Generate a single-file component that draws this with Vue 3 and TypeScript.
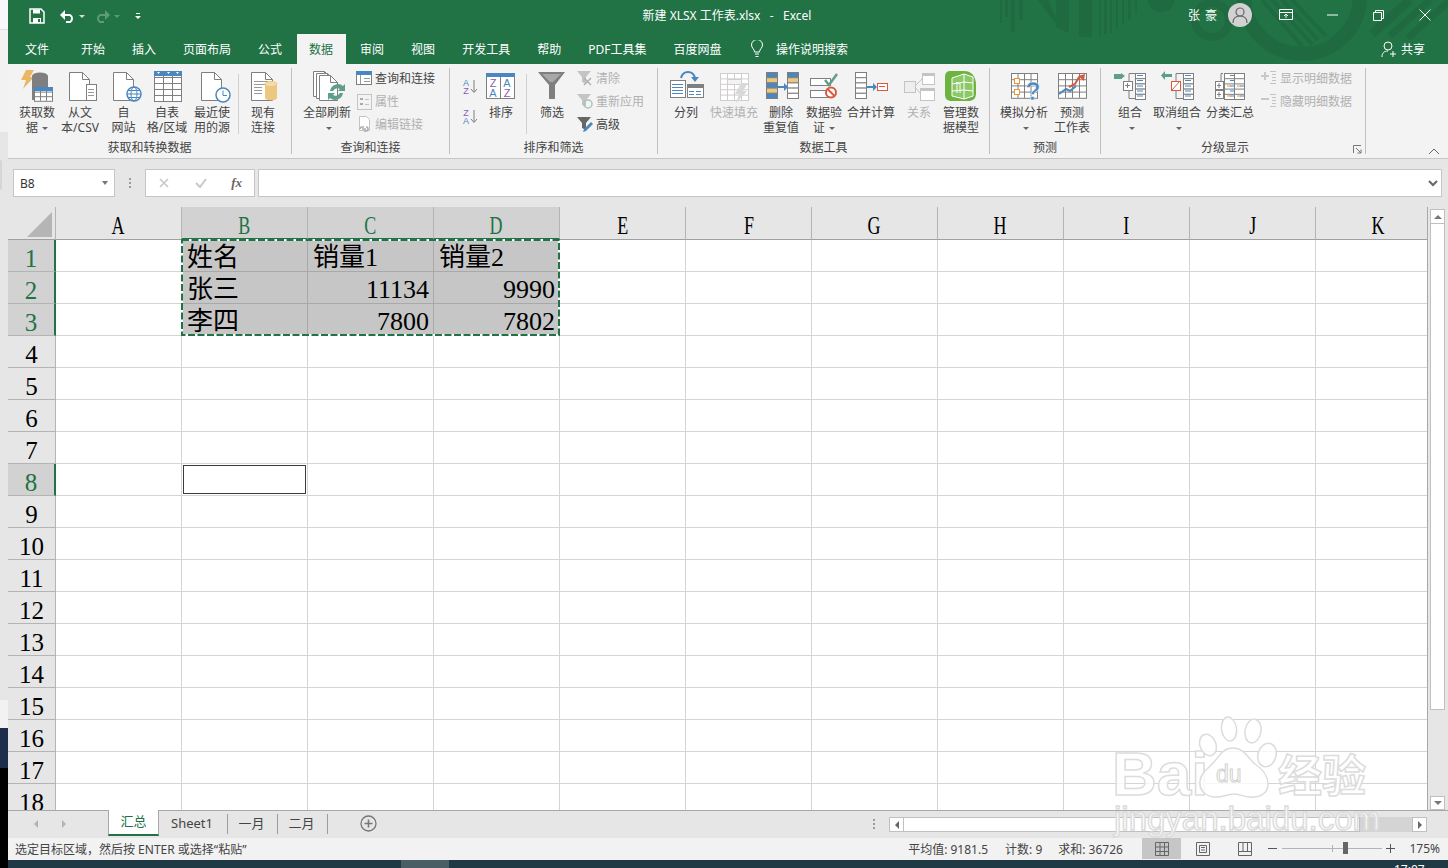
<script setup lang="ts">
type Row = { icon: string; label: string; off?: boolean }
type Item =
  | { kind: 'big'; w: number; icon: string; lines: string[]; caret?: boolean; off?: boolean }
  | { kind: 'sep'; w: number }
  | { kind: 'small'; w: number; ml?: number; rows: Row[] }
  | { kind: 'sort'; w: number }
type Group = { title: string; w: number; pad: number; launcher?: boolean; items: Item[] }

const G = '#7f7f7f'
const L = '#c4c4c4'
const BLUE = '#4a86c0'
const GOLD = '#ecc77f'
const RED = '#d9593d'
const TEAL = '#5f9e8a'

const svg = (w: number, h: number, body: string) =>
  `<svg width="${w}" height="${h}" viewBox="0 0 ${w} ${h}" style="display:block;overflow:visible">${body}</svg>`
const page = (x: number, y: number, w = 20, h = 28, s = G) =>
  `<path d="M${x + 0.5} ${y + 0.5}h${w - 7}l7 7v${h - 7}h-${w}z" fill="#fff" stroke="${s}"/><path d="M${x + w - 6.5} ${y + 0.5}v7h7" fill="none" stroke="${s}"/>`
const rect = (x: number, y: number, w: number, h: number, fill = '#fff', s = G) =>
  `<rect x="${x + 0.5}" y="${y + 0.5}" width="${w}" height="${h}" fill="${fill}" stroke="${s}"/>`
const lines = (d: string, s = G, sw = 1) => `<path d="${d}" fill="none" stroke="${s}" stroke-width="${sw}"/>`
const table = (x: number, y: number, cols: number, rows: number, cw: number, ch: number, s = G) => {
  let out = rect(x, y, cols * cw, rows * ch, '#fff', s)
  for (let i = 1; i < cols; i++) out += lines(`M${x + i * cw + 0.5} ${y}v${rows * ch}`, s)
  for (let i = 1; i < rows; i++) out += lines(`M${x} ${y + i * ch + 0.5}h${cols * cw}`, s)
  return out
}
const stack = (x: number, y: number, colors: string[], w = 11, ch = 5, s = G) =>
  colors.map((c, i) => rect(x, y + i * ch, w, ch, c, s)).join('')
const letter = (x: number, y: number, t: string, c: string, size = 10) =>
  `<text x="${x}" y="${y}" font-family="Liberation Sans" font-size="${size}" fill="${c}" text-anchor="middle">${t}</text>`
const funnel = (c: string) => `<path d="M0 1h14l-5 6v7l-4-2V7z" fill="${c}"/>`

const icons: Record<string, string> = {
  getData: svg(34, 34,
    `<path d="M6 1h8l-4 7h4L3 20l3-9H1z" fill="#eab766"/><ellipse cx="20" cy="7" rx="8" ry="3.5" fill="${G}"/><path d="M12 7h16v24H12z" fill="${G}"/>` +
    table(14, 18, 3, 3, 6, 4.6) + `<rect x="14" y="18" width="19" height="4" fill="${BLUE}"/>`),
  fromText: svg(34, 34, page(6, 3) + rect(23, 15, 10, 16) + lines('M25 20.5h6M25 23.5h6M25 26.5h6', '#999')),
  fromWeb: svg(34, 34, page(6, 3) +
    `<circle cx="27" cy="25" r="7" fill="#fff" stroke="${BLUE}" stroke-width="1.5"/><ellipse cx="27" cy="25" rx="3" ry="7" fill="none" stroke="${BLUE}"/>` +
    lines('M20 25h14M21 21.5h12M21 28.5h12', BLUE)),
  fromTable: svg(34, 34, table(4, 2, 3, 5, 9, 6) + `<rect x="4" y="2" width="28" height="5" fill="${BLUE}"/><path d="M7 3h3l-1.5 2zM17 3h3l-1.5 2zM26 3h3l-1.5 2z" fill="#fff"/>`),
  recent: svg(34, 34, page(6, 3) + `<circle cx="28" cy="26" r="7" fill="#fff" stroke="${BLUE}" stroke-width="1.5"/>` + lines('M28 21.5v5h4', BLUE)),
  existing: svg(34, 34, page(5, 3, 21, 28) + lines('M8 12.5h14M8 15.5h14M8 18.5h8M8 21.5h8M8 24.5h8', '#999') +
    `<path d="M19 15h12v14c0 3-12 3-12 0z" fill="${GOLD}"/><ellipse cx="25" cy="15" rx="6" ry="2.5" fill="#f5dca8" stroke="${GOLD}"/>`),
  refreshAll: svg(34, 34, page(3, 2, 18, 25) + page(6, 4, 18, 25) + page(9, 6, 18, 25) +
    `<path d="M20 25a8 8 0 0 1 13-5l2-2v7h-7l2-2a5 5 0 0 0-7 2zM33 27a8 8 0 0 1-13 5l-2 2v-7h7l-2 2a5 5 0 0 0 7-2z" fill="${TEAL}" transform="translate(0 -3)"/>`),
  query: svg(16, 16, rect(0, 1, 15, 13) + `<rect x="0" y="1" width="16" height="4" fill="${BLUE}"/>` + lines('M4.5 5v9M8 8.5h6M8 11.5h6', '#999')),
  props: svg(16, 16, rect(1, 1, 14, 15, '#f3f3f3', L) + `<rect x="4" y="5" width="3" height="2" fill="#aaa"/><rect x="4" y="10" width="3" height="2" fill="#aaa"/>` + lines('M9 6.5h4M9 11.5h4', L)),
  links: svg(16, 16, `<path d="M3.5 .5h7l3 3v11h-10z" fill="#fff" stroke="${L}"/>` + lines('M4 13a2 2 0 0 1 2-2h2M8 15h2a2 2 0 0 0 0-4M6 13h4', '#aaa', 1.5)),
  az: svg(16, 16, letter(4, 8, 'A', BLUE, 9) + letter(4, 16, 'Z', '#8a5cb0', 9) + lines('M12 2v12M9 11l3 3.5 3-3.5', G)),
  za: svg(16, 16, letter(4, 8, 'Z', '#8a5cb0', 9) + letter(4, 16, 'A', BLUE, 9) + lines('M12 2v12M9 11l3 3.5 3-3.5', G)),
  sort: svg(34, 34, rect(2, 4, 28, 25, '#fff') + `<rect x="2" y="4" width="29" height="4" fill="${BLUE}"/>` + lines('M16.5 8v21') +
    letter(9, 18, 'Z', '#8a5cb0', 11) + letter(9, 28, 'A', BLUE, 11) + letter(23, 18, 'A', BLUE, 11) + letter(23, 28, 'Z', '#8a5cb0', 11)),
  filter: svg(34, 34, `<path d="M3 3h27L20 16v14h-6V16z" fill="${G}"/><path d="M7 5h19l-8 8h-3z" fill="#a8a8a8"/>`),
  clear: svg(16, 16, funnel(L) + lines('M7 8l7 7M14 8l-7 7', '#b0b0b0', 1.5)),
  reapply: svg(16, 16, funnel(L) + `<circle cx="11" cy="11" r="4" fill="none" stroke="#a8c4b8" stroke-width="1.5"/>`),
  advanced: svg(16, 16, funnel('#666') + `<path d="M14 6l2 2-7 7-3 1 1-3z" fill="${BLUE}"/>`),
  split: svg(38, 34, rect(3, 11, 15, 17) + lines('M5 15.5h11M5 18.5h11M5 21.5h11M5 24.5h11', BLUE) +
    rect(20, 15, 16, 13) + `<rect x="20" y="15" width="17" height="4" fill="${G}"/>` + lines('M22 22.5h5M29 22.5h5M22 25.5h5M29 25.5h5', BLUE) +
    lines('M14 9c2-8 12-8 14 0', BLUE, 2) + `<path d="M24 8h8l-4 5z" fill="${BLUE}"/>`),
  flash: svg(34, 34, table(3, 4, 4, 5, 7, 5.4, '#d0ccd0') + rect(10, 10, 14, 5, '#f3f3f3', '#cfcfcf') + `<path d="M24 14h7l-5 8h4L19 34l3-9h-4z" fill="#d8d8d8"/>`),
  dedupe: svg(34, 34, stack(2, 3, [BLUE, GOLD, BLUE, GOLD, BLUE], 11, 5.2) + `<path d="M13 17h7v-3l4 4-4 4v-3h-7z" fill="${BLUE}"/>` + stack(23, 3, [BLUE, GOLD, '#fff', '#fff', '#fff'], 11, 5.2)),
  validate: svg(34, 34, rect(3, 9, 20, 7, '#fff') + rect(3, 21, 18, 7, '#fff') + lines('M18 11l4 5 8-11', TEAL, 2.5) +
    `<circle cx="24" cy="23.5" r="5" fill="#fff" stroke="${RED}" stroke-width="2"/>` + lines('M20.5 20l7 7', RED, 2)),
  consolidate: svg(34, 34, stack(1, 3, ['#fff', '#fff', '#fff', '#fff', '#fff'], 11, 5.2) + `<path d="M13 17h6v-3l4 4-4 4v-3h-6z" fill="${BLUE}"/>` + rect(23, 14, 10, 7, '#fff', RED) + lines('M25 17.5h6', RED)),
  relations: svg(34, 34, rect(2, 12, 11, 11, '#eee', L) + rect(20, 4, 12, 11, '#fff', L) + rect(18, 19, 14, 12, '#fff', L) +
    `<rect x="20" y="4" width="13" height="3" fill="${L}"/><rect x="18" y="19" width="15" height="3" fill="${L}"/>` + lines('M13 17l7-7M13 18l5 6', L)),
  model: svg(34, 34, `<path d="M6 2h14c8 0 12 6 12 14v8c0 6-3 8-8 8H8c-5 0-7-2-7-7V8c0-4 2-6 5-6z" fill="#6cb33f"/><path d="M8 9l12-4 9 3v19l-9 3-12-3z" fill="#8bc866" stroke="#fff"/>` +
    lines('M20 5v25M8 15l12-2 9 1M8 22l12-1 9 1', '#fff') + lines('M13 13v11M11 15l2-2 2 2M16 24V13', '#fff')),
  whatif: svg(34, 34, table(4, 4, 4, 4, 6.5, 6.2) + rect(7, 9, 5, 5, '#fff', '#e8953a') + rect(7, 20, 5, 5, '#fff', '#e8953a') +
    `<text x="26" y="31" font-family="Liberation Sans" font-weight="700" font-size="25" fill="${BLUE}" text-anchor="middle" stroke="#fff" stroke-width=".5">?</text>`),
  forecast: svg(34, 34, table(3, 4, 4, 4, 7, 6.2) + lines('M4 25l7-5 4 2 6-5', BLUE, 2) + lines('M14 18l6-3 4-7', RED, 2) + `<path d="M23 7l7-2-1 7z" fill="${RED}"/>`),
  group: svg(34, 34, `<path d="M1 7h7v-3l4 3-4 3V7z" fill="${TEAL}"/><path d="M1 5h8v5H1z" fill="${TEAL}"/>` + lines('M23 4.5h-7v25h7', G) + rect(10, 12, 9, 9) + lines('M12 16.5h5M14.5 14v5', G) + stack(22, 4, ['#fff', '#fff', '#fff', '#fff', '#fff'], 10, 5.2) + lines('M24 6.5h6M24 11.5h6M24 17h6M24 22h6M24 27h6', BLUE)),
  ungroup: svg(34, 34, `<path d="M12 5H5V2L1 6.5 5 11V8h7z" fill="${TEAL}"/>` + lines('M23 4.5h-7v25h7', G) + rect(11, 12, 9, 9, '#fff', RED) + lines('M12 21l8-9', RED) + stack(23, 4, ['#fff', '#fff', '#fff', '#fff', '#fff'], 10, 5.2) + lines('M25 6.5h6M25 11.5h6M25 17h6M25 22h6M25 27h6', BLUE)),
  subtotal: svg(34, 34, lines('M10 4.5H8v25h2') + rect(2, 12, 8, 8) + rect(2, 21, 8, 8) + lines('M4 16.5h4M6 14v5M4 25.5h4M6 23v5') + table(11, 4, 2, 5, 10, 5.2) + lines('M17 6.5h4M17 11.5h4M17 17h4M27 17h4M17 27h4M27 27h4M17 22h4', BLUE) + lines('M14 17h4M24 17h4M14 27h4M24 27h4', '#e8953a')),
  showDetail: svg(16, 16, `<path d="M0 5h3V2h2v3h3v2H5v3H3V7H0z" fill="#c8c8c8"/>` + lines('M9 1.5h6M11 4.5h4M11 7.5h4M11 10.5h4M9 13.5h6', L)),
  hideDetail: svg(16, 16, `<path d="M0 5h8v2H0z" fill="#c8c8c8"/>` + lines('M9 1.5h6M11 4.5h4M11 7.5h4M11 10.5h4M9 13.5h6', L)),
}

const groups: Group[] = [
  {
    title: '获取和转换数据', w: 284, pad: 7,
    items: [
      { kind: 'big', w: 44, icon: 'getData', lines: ['获取数', '据'], caret: true },
      { kind: 'big', w: 42, icon: 'fromText', lines: ['从文', '本/CSV'] },
      { kind: 'big', w: 45, icon: 'fromWeb', lines: ['自', '网站'] },
      { kind: 'big', w: 42, icon: 'fromTable', lines: ['自表', '格/区域'] },
      { kind: 'big', w: 48, icon: 'recent', lines: ['最近使', '用的源'] },
      { kind: 'sep', w: 4 },
      { kind: 'big', w: 46, icon: 'existing', lines: ['现有', '连接'] },
    ],
  },
  {
    title: '查询和连接', w: 158, pad: 6,
    items: [
      { kind: 'big', w: 58, icon: 'refreshAll', lines: ['全部刷新', ''], caret: true },
      {
        kind: 'small', w: 90,
        rows: [
          { icon: 'query', label: '查询和连接' },
          { icon: 'props', label: '属性', off: true },
          { icon: 'links', label: '编辑链接', off: true },
        ],
      },
    ],
  },
  {
    title: '排序和筛选', w: 208, pad: 12,
    items: [
      { kind: 'sort', w: 24 },
      { kind: 'big', w: 30, icon: 'sort', lines: ['排序'] },
      { kind: 'sep', w: 20 },
      { kind: 'big', w: 32, icon: 'filter', lines: ['筛选'] },
      {
        kind: 'small', w: 80, ml: 9,
        rows: [
          { icon: 'clear', label: '清除', off: true },
          { icon: 'reapply', label: '重新应用', off: true },
          { icon: 'advanced', label: '高级' },
        ],
      },
    ],
  },
  {
    title: '数据工具', w: 332, pad: 6,
    items: [
      { kind: 'big', w: 44, icon: 'split', lines: ['分列'] },
      { kind: 'big', w: 52, icon: 'flash', lines: ['快速填充'], off: true },
      { kind: 'big', w: 42, icon: 'dedupe', lines: ['删除', '重复值'] },
      { kind: 'big', w: 44, icon: 'validate', lines: ['数据验', '证'], caret: true },
      { kind: 'big', w: 50, icon: 'consolidate', lines: ['合并计算'] },
      { kind: 'big', w: 46, icon: 'relations', lines: ['关系'], off: true },
      { kind: 'big', w: 38, icon: 'model', lines: ['管理数', '据模型'] },
    ],
  },
  {
    title: '预测', w: 111, pad: 8,
    items: [
      { kind: 'big', w: 52, icon: 'whatif', lines: ['模拟分析', ''], caret: true },
      { kind: 'big', w: 44, icon: 'forecast', lines: ['预测', '工作表'] },
    ],
  },
  {
    title: '分级显示', w: 265, pad: 7, launcher: true,
    items: [
      { kind: 'big', w: 44, icon: 'group', lines: ['组合', ''], caret: true },
      { kind: 'big', w: 50, icon: 'ungroup', lines: ['取消组合', ''], caret: true },
      { kind: 'big', w: 56, icon: 'subtotal', lines: ['分类汇总'] },
      {
        kind: 'small', w: 100, ml: 3,
        rows: [
          { icon: 'showDetail', label: '显示明细数据', off: true },
          { icon: 'hideDetail', label: '隐藏明细数据', off: true },
        ],
      },
    ],
  },
]

const tabs = ['文件', '开始', '插入', '页面布局', '公式', '数据', '审阅', '视图', '开发工具', '帮助', 'PDF工具集', '百度网盘']
const columns = ['A', 'B', 'C', 'D', 'E', 'F', 'G', 'H', 'I', 'J', 'K']
const rows = Array.from({ length: 18 }, (_, i) => i + 1)
const cells: Record<string, string> = {
  B1: '姓名', C1: '销量1', D1: '销量2',
  B2: '张三', C2: '11134', D2: '9990',
  B3: '李四', C3: '7800', D3: '7802',
}
const selCols = ['B', 'C', 'D']
const inRange = (c: string, r: number) => selCols.includes(c) && r <= 3
const isNum = (v?: string) => !!v && /^\d+$/.test(v)
</script>

<template>
  <div class="app">
    <div class="strip">
      <i class="s1" /><i class="s2" /><i class="s3" /><i class="s4" /><i class="s5" /><i class="s6" />
    </div>

    <div class="main">
      <header class="titlebar">
        <svg class="deco" width="460" height="64" viewBox="988 0 460 64">
          <g fill="#1f6a41">
            <rect x="1000" y="0" width="2" height="23" /><rect x="1005" y="0" width="3" height="17" />
            <rect x="1011" y="0" width="4" height="32" /><rect x="1019" y="0" width="4" height="20" />
            <path d="M1038 0h10l8 18v6zM1056 0h13v33l-13-6zM1079 0h13v37h-13z" />
            <rect x="1099" y="0" width="2" height="36" /><rect x="1104" y="0" width="3" height="34" />
            <rect x="1110" y="0" width="2" height="33" /><rect x="1116" y="0" width="2" height="30" />
            <rect x="1122" y="0" width="2" height="25" /><rect x="1128" y="0" width="3" height="20" />
            <rect x="1135" y="0" width="2" height="14" />
            <circle cx="1161" cy="-2" r="14" />
          </g>
          <circle cx="1212" cy="20" r="17" fill="none" stroke="#1f6a41" stroke-width="8" />
          <circle cx="1302" cy="-4" r="58" fill="none" stroke="#1f6a41" stroke-width="14" />
          <g stroke="#1f6a41" stroke-width="4">
            <path d="M1262 0l40 46M1272 0l40 44M1282 0l36 40M1292 0l34 36" />
            <path d="M1372 34l38-34" stroke-width="9" />
            <path d="M1390 36l40-36M1408 38l40-36" stroke-width="7" />
          </g>
        </svg>

        <div class="title-row">
          <div class="qat">
            <svg class="q-save" width="16" height="16" viewBox="0 0 16 16"><path d="M1 1h11l3 3v11H1z" fill="none" stroke="#fff" stroke-width="1.5" /><path d="M4 1.5h7v4H4zM4 10h8v5H4z" fill="#fff" /><rect x="9" y="11" width="2" height="3" fill="#217346" /></svg>
            <svg class="q-undo" width="15" height="13" viewBox="0 0 15 13"><path d="M4 5h6a4 4 0 0 1 0 7H6" fill="none" stroke="#fff" stroke-width="2" /><path d="M5 0v10L0 5z" fill="#fff" /></svg>
            <i class="q-caret" />
            <svg class="q-redo" width="15" height="13" viewBox="0 0 15 13"><path d="M11 5H5a4 4 0 0 0 0 7h4" fill="none" stroke="#5c9a7a" stroke-width="2" /><path d="M10 0v10l5-5z" fill="#5c9a7a" /></svg>
            <i class="q-caret dim" />
            <svg class="q-more" width="6" height="7" viewBox="0 0 6 7"><path d="M1 0h4v1H1z M0 3h6L3 6z" fill="#fff" /></svg>
          </div>
          <div class="doc-title">新建 XLSX 工作表.xlsx&nbsp;&nbsp;&nbsp;-&nbsp;&nbsp;&nbsp;Excel</div>
          <div class="win">
            <span class="user">张 豪</span>
            <span class="avatar">
              <svg width="18" height="18" viewBox="0 0 18 18"><circle cx="9" cy="6" r="4" fill="none" stroke="#666" stroke-width="1.2" /><path d="M2 17c0-5 3-7 7-7s7 2 7 7" fill="none" stroke="#666" stroke-width="1.2" /></svg>
            </span>
            <svg class="w-ribbon" width="14" height="12" viewBox="0 0 14 12"><path d="M.5.5h13v10H.5zM.5 3.5h13M7 9V5M5 7l2-2 2 2" fill="none" stroke="#fff" /></svg>
            <svg class="w-min" width="11" height="2" viewBox="0 0 11 2"><path d="M0 1h11" stroke="#fff" /></svg>
            <svg class="w-max" width="11" height="11" viewBox="0 0 11 11"><path d="M.5 2.5h8v8h-8zM2.5 2.5v-2h8v8h-2" fill="none" stroke="#fff" /></svg>
            <svg class="w-close" width="12" height="12" viewBox="0 0 12 12"><path d="M.5.5l11 11M11.5.5l-11 11" stroke="#fff" /></svg>
          </div>
        </div>

        <nav class="tabs">
          <span v-for="t in tabs" :key="t" class="tab" :class="{ on: t === '数据', first: t === '文件' }">{{ t }}</span>
          <svg class="bulb" width="14" height="18" viewBox="0 0 14 18"><path d="M4.5 12c0-3-3-4-3-7a5.5 5.5 0 0 1 11 0c0 3-3 4-3 7zM5 14h4M5.5 16.5h3" fill="none" stroke="#fff" /></svg>
          <span class="tell">操作说明搜索</span>
          <span class="share">
            <svg width="16" height="17" viewBox="0 0 16 17"><circle cx="7" cy="5" r="4" fill="none" stroke="#fff" /><path d="M1 16c0-4 2-6 6-6M12 10v6M9 13h6" fill="none" stroke="#fff" /></svg>
            共享
          </span>
        </nav>
      </header>

      <section class="ribbon">
        <div v-for="g in groups" :key="g.title" class="group" :style="{ width: g.w + 'px' }">
          <div class="items" :style="{ paddingLeft: g.pad + 'px' }">
            <template v-for="(it, n) in g.items" :key="n">
              <div v-if="it.kind === 'big'" class="big" :class="{ off: it.off }" :style="{ width: it.w + 'px' }">
                <span class="ico" v-html="icons[it.icon]" />
                <span v-for="(l, i) in it.lines" :key="i" class="line">
                  {{ l }}<i v-if="it.caret && i === it.lines.length - 1" class="caret" />
                </span>
              </div>
              <div v-else-if="it.kind === 'sep'" class="sep" :style="{ width: it.w + 'px' }" />
              <div v-else-if="it.kind === 'sort'" class="sortcol" :style="{ width: it.w + 'px' }">
                <span v-html="icons.az" />
                <span v-html="icons.za" />
              </div>
              <div v-else class="small" :style="{ width: it.w + 'px', marginLeft: (it.ml ?? 0) + 'px' }">
                <div v-for="r in it.rows" :key="r.label" class="srow" :class="{ off: r.off }">
                  <span class="sico" v-html="icons[r.icon]" />{{ r.label }}
                </div>
              </div>
            </template>
          </div>
          <div class="gtitle" :class="{ shift: g.launcher }">{{ g.title }}</div>
          <svg v-if="g.launcher" class="launcher" width="9" height="9" viewBox="0 0 9 9"><path d="M.5 8V.5H8M3 3l5 5M8 4.5V8H4.5" fill="none" stroke="#777" /></svg>
        </div>
        <svg class="collapse" width="12" height="7" viewBox="0 0 12 7"><path d="M1 6l5-5 5 5" fill="none" stroke="#666" /></svg>
      </section>

      <section class="formula">
        <div class="namebox">B8<i class="nb-caret" /></div>
        <div class="dots"><i /><i /><i /></div>
        <div class="fx-box">
          <svg width="12" height="12" viewBox="0 0 12 12"><path d="M2 2l8 8M10 2l-8 8" stroke="#c8c8c8" stroke-width="1.6" /></svg>
          <svg width="14" height="12" viewBox="0 0 14 12"><path d="M2 6l4 4 6-8" fill="none" stroke="#c8c8c8" stroke-width="2" /></svg>
          <span class="fx">fx</span>
        </div>
        <div class="input">
          <svg width="10" height="7" viewBox="0 0 10 7"><path d="M1 1l4 4 4-4" fill="none" stroke="#666" stroke-width="2" /></svg>
        </div>
      </section>

      <section class="sheet">
        <div class="gridwrap">
          <div class="grid">
            <div class="head corner">
              <svg width="26" height="26" viewBox="0 0 26 26"><path d="M25 0v25H0z" fill="#b5b5b5" /></svg>
            </div>
            <div v-for="c in columns" :key="c" class="head col" :class="{ sel: selCols.includes(c) }"><span>{{ c }}</span></div>
            <template v-for="r in rows" :key="r">
              <div class="head rowh" :class="{ sel: r <= 3 || r === 8 }">{{ r }}</div>
              <div
                v-for="c in columns"
                :key="c + r"
                class="cell"
                :class="{ range: inRange(c, r), num: isNum(cells[c + r]) }"
              >
                {{ cells[c + r] }}
                <div v-if="c === 'B' && r === 8" class="active" />
              </div>
            </template>
          </div>
          <svg class="ants" width="380" height="98" viewBox="0 0 380 98">
            <rect x="1" y="1" width="377" height="95" fill="none" stroke="#fff" stroke-width="2" />
            <rect x="1" y="1" width="377" height="95" fill="none" stroke="#217346" stroke-width="2" stroke-dasharray="7 2.5" />
          </svg>
        </div>
        <div class="vscroll">
          <div class="vbtn"><i class="up" /></div>
          <div class="vthumb" />
          <div class="vtrack" />
          <div class="vbtn down"><i class="dn" /></div>
        </div>
      </section>

      <section class="sheettabs">
        <div class="nav"><i class="l" /><i class="r" /></div>
        <div class="stab on">汇总</div>
        <div class="stab s1w">Sheet1</div>
        <div class="stab s2w">一月</div>
        <div class="stab s2w">二月</div>
        <svg class="add" width="17" height="17" viewBox="0 0 17 17"><circle cx="8.5" cy="8.5" r="7.5" fill="none" stroke="#777" stroke-width="1.3" /><path d="M4.5 8.5h8M8.5 4.5v8" stroke="#777" stroke-width="1.6" /></svg>
        <div class="hdots"><i /><i /><i /></div>
        <div class="hscroll">
          <div class="hbtn"><i class="l" /></div>
          <div class="hthumb" />
          <div class="htrack" />
          <div class="hbtn"><i class="r" /></div>
        </div>
      </section>

      <footer class="status">
        <span class="msg">选定目标区域，然后按 ENTER 或选择“粘贴”</span>
        <span class="stat s-a">平均值: 9181.5</span>
        <span class="stat s-b">计数: 9</span>
        <span class="stat s-c">求和: 36726</span>
        <span class="view on">
          <svg width="14" height="14" viewBox="0 0 14 14"><path d="M.5.5h13v13H.5zM.5 5h13M.5 9.5h13M5 .5v13M9.5.5v13" fill="none" stroke="#666" /></svg>
        </span>
        <span class="view">
          <svg width="14" height="14" viewBox="0 0 14 14"><path d="M.5.5h13v13H.5zM3.5 3.5h7v7h-7zM5 5.5h4M5 8h4" fill="none" stroke="#666" /></svg>
        </span>
        <span class="view">
          <svg width="14" height="14" viewBox="0 0 14 14"><path d="M.5.5h13v13H.5zM.5 9.5h13M5 .5v9M9.5.5v9" fill="none" stroke="#666" /></svg>
        </span>
        <span class="zm minus" />
        <span class="slider"><i class="tick" /><i class="knob" /></span>
        <span class="zm plus" />
        <span class="pct">175%</span>
      </footer>

      <div class="taskbar">
        <i class="task-btn" />
        <span class="clock">17:07</span>
      </div>
    </div>

    <svg class="watermark" width="280" height="135" viewBox="1105 708 280 135">
      <g fill="rgba(255,255,255,.78)" stroke="#dcdcdc" stroke-width="1.5" font-family="Liberation Sans">
        <text x="1112" y="795" font-size="62" font-weight="700">Bai</text>
        <ellipse cx="1229" cy="729" rx="7.5" ry="12" transform="rotate(-8 1229 729)" />
        <ellipse cx="1253" cy="731" rx="8" ry="12" transform="rotate(10 1253 731)" />
        <ellipse cx="1208" cy="745" rx="8" ry="11" transform="rotate(-22 1208 745)" />
        <ellipse cx="1267" cy="755" rx="9" ry="12" transform="rotate(16 1267 755)" />
        <path d="M1233 748c12 0 14 10 22 16 9 6 13 12 13 20 0 10-9 14-18 13-6 0-11-3-16-3-7 0-12 4-20 3-10-1-15-8-14-16 1-9 9-13 14-19 5-5 8-14 19-14z" />
        <text x="1216" y="782" font-size="23" stroke-width="1" stroke="#d2d2d2">du</text>
        <text x="1278" y="792" font-size="44" font-family="Noto Sans CJK SC" font-weight="700">经验</text>
        <text x="1114" y="830" font-size="33">jingyan.baidu.com</text>
      </g>
    </svg>
  </div>
</template>

<style>
html,
body {
  margin: 0;
  overflow: hidden;
}
</style>

<style scoped>
.app {
  position: relative;
  display: flex;
  width: 1448px;
  height: 868px;
  overflow: hidden;
  font-family: 'Noto Sans', 'Noto Sans CJK SC', sans-serif;
  font-size: 12px;
  color: #444;
  background: #e6e6e6;
}

.strip {
  display: flex;
  flex-direction: column;
  flex: none;
  width: 8px;
}
.strip i { display: block; }
.s1 { height: 29px; background: #f8f8fb; border-bottom: 1px solid #dcdce2; }
.s2 { height: 102px; background: #f2f2f2; }
.s3 { position: relative; height: 568px; background: #e6e6e6; }
.s3::before {
  content: '';
  position: absolute;
  left: 0;
  top: 28px;
  width: 2px;
  height: 30px;
  border-radius: 0 2px 2px 0;
  background: #d6d6d6;
}
.s4 { height: 28px; background: #f2f2f2; }
.s5 { height: 40px; background: #1f2d4d; }
.s6 { height: 100px; background: #000; }

.main {
  display: flex;
  flex-direction: column;
  width: 1440px;
}

/* title bar */
.titlebar {
  position: relative;
  height: 64px;
  flex: none;
  background: #217346;
  color: #fff;
  overflow: hidden;
}
.deco { position: absolute; right: 0; top: 0; }
.title-row {
  position: relative;
  display: grid;
  grid-template-columns: 1fr auto 1fr;
  align-items: center;
  height: 30px;
  margin-bottom: 4px;
}
.qat { display: flex; align-items: center; padding: 2px 0 0 21px; }
.q-undo { margin-left: 15px; }
.q-caret {
  width: 0;
  height: 0;
  margin-left: 4px;
  border: 3px solid transparent;
  border-top: 3px solid #cde0d5;
  border-bottom: 0;
}
.q-caret.dim { border-top-color: #5c9a7a; }
.q-redo { margin-left: 10px; }
.q-more { margin-left: 15px; }
.doc-title { font-size: 12px; white-space: nowrap; margin-right: 2px; }
.win { display: flex; align-items: center; justify-content: flex-end; }
.user { margin-right: 11px; word-spacing: 2px; }
.avatar {
  display: flex;
  align-items: center;
  justify-content: center;
  width: 24px;
  height: 24px;
  border-radius: 50%;
  background: #d2d2d2;
}
.w-ribbon { margin-left: 27px; }
.w-min { margin-left: 34px; }
.w-max { margin-left: 35px; }
.w-close { margin-left: 35px; margin-right: 17px; }

.tabs {
  position: relative;
  display: flex;
  align-items: stretch;
  height: 30px;
  padding-left: 3.5px;
}
.tab {
  display: flex;
  align-items: center;
  margin: 0 1px;
  padding: 0 12.5px;
  white-space: nowrap;
}
.tab.first { margin-right: 6px; }
.tab.on {
  background: #f3f3f3;
  color: #217346;
}
.bulb { align-self: center; margin-left: 15px; }
.tell { align-self: center; margin-left: 12px; }
.share {
  display: flex;
  align-items: center;
  gap: 4px;
  margin-left: auto;
  padding-right: 23px;
}

/* ribbon */
.ribbon {
  position: relative;
  display: flex;
  flex: none;
  height: 95px;
  box-sizing: border-box;
  background: #f3f3f3;
  border-bottom: 1px solid #c6c6c6;
}
.group {
  position: relative;
  display: flex;
  flex-direction: column;
  flex: none;
  box-sizing: border-box;
  height: 86px;
  margin-top: 4px;
  border-right: 1px solid #c0c0c0;
}
.items { display: flex; height: 73px; }
.big {
  display: flex;
  flex-direction: column;
  align-items: center;
  flex: none;
  padding-top: 1px;
  white-space: nowrap;
}
.ico { height: 34px; margin-bottom: 2px; }
.line { height: 15px; line-height: 15px; }
.off { color: #b1b1b1; }
.caret {
  display: inline-block;
  width: 0;
  height: 0;
  margin-left: 4px;
  vertical-align: 2px;
  border-left: 3px solid transparent;
  border-right: 3px solid transparent;
  border-top: 3px solid #666;
}
.sep { position: relative; flex: none; }
.sep::after {
  content: '';
  position: absolute;
  left: 50%;
  top: 6px;
  height: 60px;
  border-left: 1px solid #d0d0d0;
}
.sortcol {
  display: flex;
  flex-direction: column;
  gap: 14px;
  flex: none;
  padding-top: 10px;
  box-sizing: border-box;
}
.small { flex: none; margin-top: -2px; }
.srow {
  display: flex;
  align-items: center;
  height: 23px;
  white-space: nowrap;
}
.sico { width: 19px; flex: none; }
.gtitle {
  height: 13px;
  line-height: 13px;
  text-align: center;
}
.gtitle.shift { padding-right: 16px; }
.launcher { position: absolute; right: 3px; bottom: 0; }
.collapse { position: absolute; right: 8px; bottom: 3px; }

/* formula bar */
.formula {
  display: flex;
  align-items: flex-start;
  flex: none;
  height: 48px;
  box-sizing: border-box;
  padding: 10px 6px 0 5px;
  background: #e6e6e6;
}
.namebox,
.fx-box,
.input {
  display: flex;
  align-items: center;
  box-sizing: border-box;
  height: 28px;
  background: #fff;
  border: 1px solid #c6c6c6;
}
.namebox {
  justify-content: space-between;
  width: 102px;
  padding: 0 6px;
  color: #333;
}
.nb-caret {
  width: 0;
  height: 0;
  border-left: 3.5px solid transparent;
  border-right: 3.5px solid transparent;
  border-top: 4px solid #777;
}
.dots {
  display: flex;
  flex-direction: column;
  gap: 2px;
  align-items: center;
  justify-content: center;
  width: 30px;
  height: 28px;
}
.dots i,
.hdots i {
  width: 2px;
  height: 2px;
  background: #9c9c9c;
}
.fx-box {
  justify-content: space-between;
  width: 110px;
  padding: 0 12px;
}
.fx {
  font-family: 'Liberation Serif', serif;
  font-style: italic;
  font-weight: 700;
  font-size: 13px;
  color: #666;
}
.input {
  justify-content: flex-end;
  flex: 1;
  margin-left: 3px;
  padding-right: 3px;
}

/* sheet */
.sheet { display: flex; flex: none; height: 603px; }
.gridwrap {
  position: relative;
  flex: none;
  box-sizing: border-box;
  width: 1420px;
  height: 603px;
  overflow: hidden;
  border-right: 1px solid #a8a8a8;
  background: #fff;
}
.grid {
  display: grid;
  grid-template-columns: 48px repeat(11, 126px);
  grid-template-rows: 33px;
  grid-auto-rows: 32px;
  font-family: 'Liberation Serif', 'Noto Sans CJK SC', serif;
}
.head {
  display: flex;
  align-items: center;
  justify-content: center;
  box-sizing: border-box;
  background: #e6e6e6;
  font-size: 25px;
  color: #000;
  border-right: 1px solid #b4b4b4;
  border-bottom: 1px solid #b4b4b4;
}
.corner {
  justify-content: flex-end;
  padding: 3px 2px 0 0;
  border-bottom: 1px solid #a0a0a0;
}
.col { border-bottom: 1px solid #a0a0a0; padding-top: 6px; }
.col span { display: inline-block; transform: scaleX(0.72); }
.col.sel {
  background: #d2d2d2;
  color: #217346;
  border-bottom: 2px solid #217346;
}
.rowh { padding-top: 5px; line-height: 1; }
.rowh.sel {
  background: #d2d2d2;
  color: #217346;
  border-right: 2px solid #217346;
}
.cell {
  position: relative;
  display: flex;
  align-items: center;
  box-sizing: border-box;
  padding: 4px 4px 0 5px;
  font-size: 26px;
  line-height: 1;
  color: #000;
  white-space: nowrap;
  border-right: 1px solid #d4d4d4;
  border-bottom: 1px solid #d4d4d4;
}
.cell.range {
  background: #c6c6c6;
  border-color: #a9a9a9;
}
.cell.num { justify-content: flex-end; }
.active {
  position: absolute;
  inset: 1px;
  border: 1px solid #3a3a3a;
}
.ants { position: absolute; left: 173px; top: 32px; }

.vscroll {
  display: flex;
  flex-direction: column;
  flex: 1;
  box-sizing: border-box;
  padding: 2px 3px 0 2px;
  background: #e6e6e6;
}
.vbtn,
.hbtn {
  display: flex;
  align-items: center;
  justify-content: center;
  box-sizing: border-box;
  flex: none;
  background: #fff;
  border: 1px solid #c0c0c0;
}
.vbtn { height: 15px; }
.vbtn.down { height: 14px; }
.vthumb {
  flex: none;
  height: 486px;
  box-sizing: border-box;
  background: #fff;
  border: 1px solid #c0c0c0;
  border-top: 0;
}
.vtrack { flex: 1; }
.up,
.dn {
  width: 0;
  height: 0;
  border-left: 4px solid transparent;
  border-right: 4px solid transparent;
}
.up { border-bottom: 4px solid #777; }
.dn { border-top: 4px solid #777; }

/* sheet tabs */
.sheettabs {
  display: flex;
  align-items: flex-start;
  flex: none;
  box-sizing: border-box;
  height: 28px;
  background: #e6e6e6;
  border-top: 1px solid #a8a8a8;
}
.nav {
  display: flex;
  gap: 24px;
  flex: none;
  align-items: center;
  width: 100px;
  height: 25px;
  padding-left: 26px;
  box-sizing: border-box;
}
.nav .l,
.nav .r { opacity: 0.4; }
.l,
.r {
  width: 0;
  height: 0;
  border-top: 4px solid transparent;
  border-bottom: 4px solid transparent;
}
.l { border-right: 4px solid #666; }
.r { border-left: 4px solid #666; }
.stab {
  display: flex;
  align-items: center;
  justify-content: center;
  flex: none;
  box-sizing: border-box;
  font-size: 13px;
  height: 20px;
  margin-top: 3px;
  padding: 0 2px 3px 0;
  border-right: 1px solid #9c9c9c;
}
.stab.on {
  width: 51px;
  height: 26px;
  margin-top: -1px;
  padding: 0 0 3px;
  background: #fff;
  color: #217346;
  border-left: 1px solid #a8a8a8;
  border-right: 1px solid #a8a8a8;
  border-bottom: 2px solid #217346;
}
.s1w { width: 69px; }
.s2w { width: 50px; }
.add { margin: 4px 0 0 32px; flex: none; }
.hdots {
  display: flex;
  flex-direction: column;
  gap: 2px;
  align-items: center;
  flex: none;
  width: 8px;
  margin: 8px 0 0 493px;
}
.hscroll {
  display: flex;
  flex: none;
  width: 538px;
  height: 15px;
  margin: 6px 0 0 11px;
  background: #d4d4d4;
}
.hbtn { width: 15px; height: 15px; }
.hthumb {
  width: 456px;
  flex: none;
  box-sizing: border-box;
  background: #fff;
  border: 1px solid #c0c0c0;
  border-left: 0;
}
.htrack { flex: 1; }

/* status */
.status {
  display: flex;
  align-items: center;
  flex: none;
  box-sizing: border-box;
  height: 22px;
  padding: 0 0 1px 7px;
  background: #f2f2f2;
}
.msg { white-space: nowrap; }
.stat { white-space: nowrap; }
.s-a { margin-left: auto; }
.s-b { margin-left: 17px; }
.s-c { margin-left: 16px; }
.view {
  display: flex;
  align-items: center;
  justify-content: center;
  flex: none;
  width: 39.5px;
  height: 21px;
  margin-left: 2px;
}
.view.on { margin-left: 19px; background: #c6c6c6; }
.zm {
  position: relative;
  flex: none;
  width: 9px;
  height: 9px;
  margin-left: 4px;
}
.zm::before {
  content: '';
  position: absolute;
  left: 0;
  right: 0;
  top: 4px;
  height: 1px;
  background: #555;
}
.plus::after {
  content: '';
  position: absolute;
  left: 4px;
  top: 0;
  bottom: 0;
  width: 1px;
  background: #555;
}
.slider {
  position: relative;
  flex: none;
  width: 100px;
  height: 1px;
  margin-left: 5px;
  background: #b4b4b4;
}
.tick {
  position: absolute;
  left: 50px;
  top: -3px;
  width: 1px;
  height: 7px;
  background: #b4b4b4;
}
.knob {
  position: absolute;
  left: 61px;
  top: -6px;
  width: 5px;
  height: 12px;
  background: #666;
}
.plus { margin-left: 4px; }
.pct { margin-left: 14px; padding-right: 8px; white-space: nowrap; }

/* taskbar */
.taskbar {
  position: relative;
  flex: none;
  height: 8px;
  overflow: hidden;
  background: #1f3a45;
}
.task-btn {
  position: absolute;
  left: 393px;
  top: 0;
  width: 48px;
  height: 8px;
  background: #4a5e66;
}
.clock {
  position: absolute;
  left: 1386px;
  top: 3px;
  color: #fff;
  line-height: 14px;
}

.watermark {
  position: absolute;
  left: 1105px;
  top: 708px;
  pointer-events: none;
}
</style>
